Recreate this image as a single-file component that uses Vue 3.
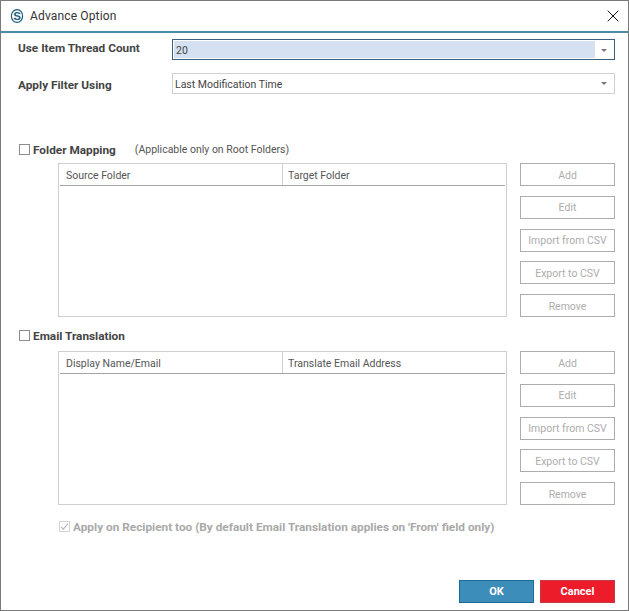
<script setup>
const folderButtons = ['Add', 'Edit', 'Import from CSV', 'Export to CSV', 'Remove']
</script>

<template>
  <div class="window">
    <header class="titlebar">
      <svg class="logo" width="14" height="16" viewBox="0 0 14 16">
        <ellipse cx="7" cy="8" rx="5.6" ry="6.4" fill="none" stroke="#1d5f7d" stroke-width="1.2" />
        <text x="7" y="12.1" text-anchor="middle" class="logo-s">S</text>
      </svg>
      <span class="title">Advance Option</span>
      <svg class="close" width="12" height="12" viewBox="0 0 12 12">
        <path d="M.7.7l10.6 10.6M11.3.7L.7 11.3" stroke="#111" stroke-width="1" fill="none" />
      </svg>
    </header>

    <main class="body">
      <div class="field first">
        <label class="strong up">Use Item Thread Count</label>
        <div class="combo focused">
          <span class="combo-value">20</span>
          <span class="arrow" />
        </div>
      </div>
      <div class="field second">
        <label class="strong down">Apply Filter Using</label>
        <div class="combo">
          <span class="combo-value">Last Modification Time</span>
          <span class="arrow" />
        </div>
      </div>

      <div class="check-row folder-check">
        <span class="check" />
        <span class="strong">Folder Mapping</span>
        <span class="hint">(Applicable only on Root Folders)</span>
      </div>
      <section class="panel">
        <div class="list">
          <div class="list-head">
            <span class="col-a">Source Folder</span>
            <span class="col-b">Target Folder</span>
          </div>
        </div>
        <div class="actions">
          <button v-for="b in folderButtons" :key="b" type="button" class="btn" disabled>{{ b }}</button>
        </div>
      </section>

      <div class="check-row email-check">
        <span class="check" />
        <span class="strong">Email Translation</span>
      </div>
      <section class="panel email-panel">
        <div class="list">
          <div class="list-head">
            <span class="col-a">Display Name/Email</span>
            <span class="col-b">Translate Email Address</span>
          </div>
        </div>
        <div class="actions">
          <button v-for="b in folderButtons" :key="b" type="button" class="btn" disabled>{{ b }}</button>
        </div>
      </section>

      <div class="recipient">
        <span class="check disabled">
          <svg width="9" height="9" viewBox="0 0 9 9">
            <path d="M1 4.8l2.3 2.4L8 1.6" fill="none" stroke="#b4b4b4" stroke-width="1.1" />
          </svg>
        </span>
        <span class="strong muted">Apply on Recipient too (By default Email Translation applies on 'From' field only)</span>
      </div>

      <footer class="footer">
        <button type="button" class="cta ok">OK</button>
        <button type="button" class="cta cancel">Cancel</button>
      </footer>
    </main>
  </div>
</template>

<style scoped>
.window{ box-sizing:border-box; width:629px; height:611px; display:flex; flex-direction:column; background:#fff; border:1px solid #7a7a7a; font-family:Roboto,"Open Sans",sans-serif; font-size:10.5px; color:#444; overflow:hidden; }
.titlebar{ flex:none; box-sizing:border-box; height:32px; display:flex; align-items:center; padding:0 10px 0 9px; border-bottom:2px solid #4d8aa3; }
.logo{ flex:none; margin-top:-1px; }
.logo-s{ font-family:"Liberation Sans",sans-serif; font-size:11.5px; font-weight:700; fill:#1d5f7d; }
.title{ margin-left:6px; font-size:12px; color:#333; letter-spacing:.15px; }
.close{ margin-left:auto; margin-top:-1px; margin-right:-1px; }

.body{ flex:1; display:flex; flex-direction:column; padding:0 13px 7px 17px; min-height:0; }
.field{ display:flex; }
.field.first{ margin-top:6px; }
.field.second{ margin-top:13px; }
.field label{ width:154px; flex:none; padding-top:0; }
.strong{ font-weight:700; font-size:11.8px; color:#444; padding-top:1px; }
.up{ line-height:18px; }
.down{ line-height:24px; }
.combo{ box-sizing:border-box; flex:1; height:21px; display:flex; align-items:center; border:1px solid #d0d0d0; padding:0 1px 0 1px; }
.combo.focused{ border-color:#3d5f78; padding:1px; }
.combo-value{ flex:1; align-self:stretch; display:flex; align-items:center; padding:1px 0 0 1px; color:#444; }
.focused .combo-value{ background:#d5e1f0; padding-left:2px; }
.arrow{ flex:none; width:18px; height:100%; position:relative; }
.arrow::after{ content:""; position:absolute; left:6px; top:8px; border:3px solid transparent; border-top:3px solid #777; border-bottom:0; }

.check-row{ display:flex; align-items:center; height:16px; margin-left:1px; }
.folder-check{ margin-top:44px; }
.email-check{ margin-top:10px; }
.check{ box-sizing:border-box; width:11px; height:11px; flex:none; border:1px solid #8c8c8c; background:#fff; margin-right:3px; display:flex; align-items:center; justify-content:center; }
.check.disabled{ border-color:#d4d4d4; }
.hint{ margin-left:19px; padding-top:1px; color:#555; }

.panel{ display:flex; margin-top:6px; height:154px; }
.email-panel{ margin-top:8px; }
.list{ box-sizing:border-box; width:449px; margin-left:40px; border:1px solid #cfcfcf; padding:0 1px; }
.list-head{ display:flex; height:21px; align-items:center; border-bottom:1px solid #a3a3a3; color:#555; }
.col-a{ box-sizing:border-box; width:223px; padding:2px 0 0 6px; height:100%; display:flex; align-items:center; border-right:1px solid #cfcfcf; }
.col-b{ flex:1; padding:2px 0 0 5px; }
.actions{ margin-left:13px; width:95px; display:flex; flex-direction:column; justify-content:space-between; }
.btn{ box-sizing:border-box; height:23px; padding:1px 0 0; background:#fff; border:1px solid #adadad; color:#adadad; font:inherit; }

.recipient{ display:flex; align-items:center; height:16px; margin:13px 0 0 41px; }
.muted{ color:#a9a9a9; }

.footer{ margin-top:auto; display:flex; justify-content:flex-end; gap:6px; }
.cta{ box-sizing:border-box; width:75px; height:23px; padding:0; color:#fff; font:inherit; font-size:11px; font-weight:700; }
.ok{ background:#3d8dbb; border:1px solid #1e6a97; }
.cancel{ background:#ec1c2b; border:1px solid #c23a45; }
</style>

<style>
html,body{ margin:0; background:#fff; }
</style>
